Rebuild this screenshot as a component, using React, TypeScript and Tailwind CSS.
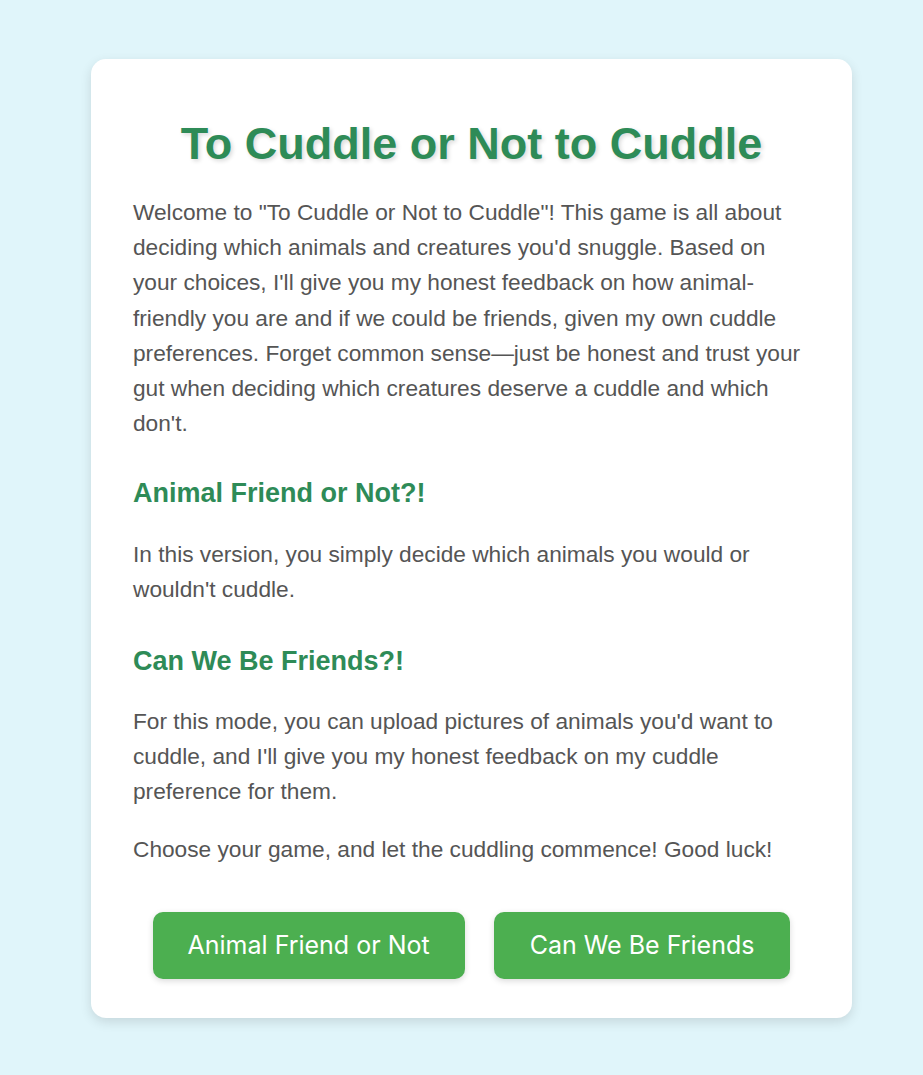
export default function App() {
  const p = "text-[22.7px] leading-[35.2px] text-[#555555]";
  const h2 = "text-[27px] font-bold leading-[32.4px] text-[#2e8b57]";
  return (
    <div className="min-h-[1075px] bg-[#e0f5fa] pt-[59px] pb-[58px]" style={{ fontFamily: '"Liberation Sans", Arial, sans-serif' }}>
      <div className="ml-[91px] w-[761px] rounded-[15px] bg-white px-[42px] pt-[58px] pb-[39px] shadow-[0_4px_12px_rgba(0,0,0,0.12)]">
        <h1 className="text-center text-[45px] font-bold leading-[54px] text-[#2e8b57] [text-shadow:2px_2px_4px_rgba(0,0,0,0.15)]">
          To Cuddle or Not to Cuddle
        </h1>
        <p className={`${p} mt-[24px]`}>
          Welcome to "To Cuddle or Not to Cuddle"! This game is all about deciding which animals and creatures you'd snuggle. Based on your choices, I'll give you my honest feedback on how animal-friendly you are and if we could be friends, given my own cuddle preferences. Forget common sense—just be honest and trust your gut when deciding which creatures deserve a cuddle and which don't.
        </p>
        <h2 className={`${h2} mt-[36px]`}>Animal Friend or Not?!</h2>
        <p className={`${p} mt-[27px]`}>
          In this version, you simply decide which animals you would or wouldn't cuddle.
        </p>
        <h2 className={`${h2} mt-[38px]`}>Can We Be Friends?!</h2>
        <p className={`${p} mt-[26px]`}>
          For this mode, you can upload pictures of animals you'd want to cuddle, and I'll give you my honest feedback on my cuddle preference for them.
        </p>
        <p className={`${p} mt-[23px]`}>Choose your game, and let the cuddling commence! Good luck!</p>
        <div className="mt-[45px] flex justify-center gap-[29px]" style={{ fontFamily: 'Inter, sans-serif' }}>
          <button className="h-[67px] rounded-[10px] bg-[#4caf50] px-[35px] text-[25px] text-white shadow-[0_2px_6px_rgba(0,0,0,0.15)]">
            Animal Friend or Not
          </button>
          <button className="h-[67px] rounded-[10px] bg-[#4caf50] px-[36px] text-[25px] text-white shadow-[0_2px_6px_rgba(0,0,0,0.15)]">
            Can We Be Friends
          </button>
        </div>
      </div>
    </div>
  );
}
